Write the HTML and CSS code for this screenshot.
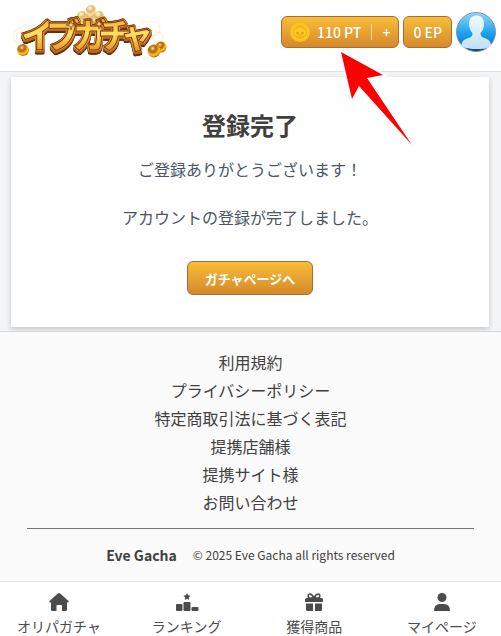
FILE: index.html
```
<!DOCTYPE html>
<html lang="ja">

<head>
    <meta charset="UTF-8">
    <meta name="viewport" content="width=device-width, initial-scale=1.0">
    <title>登録完了</title>
    <link rel="stylesheet" href="styles.css">
</head>

<body>
    <header class="header">
        <a href="#" class="logo">
            <svg width="156" height="56" viewBox="0 0 156 56">
                <defs>
                    <linearGradient id="gold" x1="0" y1="0" x2="0" y2="1">
                        <stop offset="0.2" stop-color="#f6a924" />
                        <stop offset="0.5" stop-color="#ffe164" />
                        <stop offset="0.9" stop-color="#e08c16" />
                    </linearGradient>
                    <radialGradient id="ball" cx="0.4" cy="0.3" r="0.7">
                        <stop offset="0" stop-color="#fff3b0" />
                        <stop offset="0.2" stop-color="#d98a2c" />
                        <stop offset="0.4" stop-color="#b0640f" />
                        <stop offset="0.75" stop-color="#ffc81e" />
                        <stop offset="1" stop-color="#b46c08" />
                    </radialGradient>
                    <radialGradient id="pale" cx="0.4" cy="0.3" r="0.7">
                        <stop offset="0" stop-color="#fffbe6" />
                        <stop offset="0.5" stop-color="#e3b865" />
                        <stop offset="1" stop-color="#f5dfa4" />
                    </radialGradient>
                </defs>
                <g fill="none" stroke="#fbf0cf">
                    <circle cx="8" cy="32" r="7" />
                    <circle cx="15" cy="26" r="6" />
                    <circle cx="133" cy="24" r="6" />
                    <circle cx="141" cy="25" r="7" />
                    <circle cx="146" cy="33" r="5" />
                </g>
                <g fill="url(#pale)">
                    <circle cx="67" cy="17" r="5" />
                    <circle cx="75" cy="17" r="5" />
                    <circle cx="84" cy="17" r="5" />
                    <circle cx="91" cy="17" r="5" />
                    <circle cx="70" cy="12" r="5" />
                    <circle cx="79" cy="12" r="5" />
                    <circle cx="87" cy="12" r="5" />
                    <circle cx="79" cy="6" r="5" />
                </g>
                <text class="logo-text" x="9 34 61 86 108" y="44">イブガチャ</text>
                <path d="M59 16l1 4 4 1-4 1-1 4-1-4-4-1 4-1zM87 15l1 4 4 1-4 1-1 4-1-4-4-1 4-1z" fill="#ffe88a" stroke="#8a3a10" stroke-width="0.7" />
                <circle cx="11" cy="46" r="6" fill="url(#ball)" />
                <circle cx="149" cy="43" r="5.5" fill="url(#ball)" />
                <circle cx="142" cy="47" r="6.5" fill="url(#ball)" />
            </svg>
        </a>
        <div class="points">
            <a href="#" class="gold-btn pt">
                <svg class="coin" width="20" height="20" viewBox="0 0 20 20">
                    <circle cx="10" cy="10" r="10" fill="#fac11d" />
                    <circle cx="10" cy="10" r="7.5" fill="#f5b51b" stroke="#ffd02e" />
                    <path d="M5 8q5-5 10 0l1 3q-1 4-4 2l-2-1-2 1q-3 2-4-2z" fill="#ffcb2a" />
                    <circle cx="7.5" cy="11" r="1.500" fill="#e5a012" />
                    <circle cx="12.500" cy="11" r="1.500" fill="#e5a012" />
                </svg>
                <span>110 PT</span>
                <span class="plus">+</span>
            </a>
            <a href="#" class="gold-btn ep">0 EP</a>
            <a href="#" class="avatar">
                <svg width="40" height="40" viewBox="0 0 40 40">
                    <defs>
                        <linearGradient id="sky" x1="0" y1="0" x2="0" y2="1">
                            <stop offset="0" stop-color="#8bd8fa" />
                            <stop offset="0.55" stop-color="#18a0ee" />
                            <stop offset="0.85" stop-color="#087bc8" />
                            <stop offset="1" stop-color="#073c68" />
                        </linearGradient>
                        <linearGradient id="man" x1="0" y1="0" x2="0" y2="1">
                            <stop offset="0" stop-color="#f2faff" />
                            <stop offset="1" stop-color="#bfe0fa" />
                        </linearGradient>
                    </defs>
                    <circle cx="20" cy="20" r="19.5" fill="url(#sky)" stroke="#8b9298" />
                    <path d="M20.500 3.500c5 0 7.500 3.500 7.500 8.500 0 4-1.500 7-3.500 9 0 3 1 4 4 5 4 1.500 6.500 3 6.500 8-4 3-9 3-14.500 3s-11 0-15-3c0-5 2.500-6.500 7-8 3-1 4-2 4-5-2-2-3.500-5-3.500-9 0-5 2.500-8.500 7.500-8.500z" fill="url(#man)" />
                </svg>
            </a>
        </div>
    </header>

    <svg class="arrow" width="74" height="96" viewBox="0 0 74 96">
        <path d="M2 2L44 25 28 28 73 95 20 36 13 49z" fill="#fff" stroke="#fff" stroke-width="4" />
        <path d="M2 2L44 25 28 28 73 95 20 36 13 49z" fill="#f00" />
    </svg>

    <main class="card">
        <h1>登録完了</h1>
        <p>ご登録ありがとうございます！<br><br>アカウントの登録が完了しました。</p>
        <button type="button" class="gold-btn go">ガチャページへ</button>
    </main>

    <footer class="footer">
        <ul class="links">
            <li><a href="#">利用規約</a></li>
            <li><a href="#">プライバシーポリシー</a></li>
            <li><a href="#">特定商取引法に基づく表記</a></li>
            <li><a href="#">提携店舗様</a></li>
            <li><a href="#">提携サイト様</a></li>
            <li><a href="#">お問い合わせ</a></li>
        </ul>
        <div class="copy">
            <strong>Eve Gacha</strong>
            <small>© 2025 Eve Gacha all rights reserved</small>
        </div>
    </footer>

    <nav class="tabs">
        <a href="#">
            <svg width="22" height="20" viewBox="0 0 22 20">
                <path d="M11 1Q11.600 1 12.200 1.500L20.500 9Q21.300 10 20 10.500H19V17.500Q19 19 17.500 19H14V14Q14 13 13 13H9.500Q8.500 13 8.500 14V19H4.500Q3 19 3 17.500V10.500H2Q.700 10 1.500 9L9.800 1.500Q10.400 1 11 1z" />
            </svg>
            オリパガチャ
        </a>
        <a href="#">
            <svg width="24" height="20" viewBox="0 0 24 20">
                <path d="M12 1l1.100 2.300 2.500.400-1.800 1.800.400 2.500-2.200-1.200-2.200 1.200.400-2.500-1.800-1.800 2.500-.400z" />
                <rect x="1" y="12" width="6.500" height="7" rx="1" />
                <rect x="8.500" y="10" width="7" height="9" rx="1" />
                <rect x="16.500" y="15" width="7" height="4" rx="1" />
            </svg>
            ランキング
        </a>
        <a href="#">
            <svg width="20" height="20" viewBox="0 0 20 20">
                <path d="M1 7.500Q1 6 2.500 6H17.500Q19 6 19 7.500V10H1zM2 11.500H9V19H3.500Q2 19 2 17.500zM11 11.500H18V17.500Q18 19 16.500 19H11z" />
                <path d="M10 6C8.500 3 7 1.800 5.500 2S3.500 5 5.500 6zM10 6C11.500 3 13 1.800 14.500 2S16.500 5 14.500 6z" fill="none" stroke="#4b4b4b" stroke-width="1.700" />
            </svg>
            獲得商品
        </a>
        <a href="#">
            <svg width="18" height="20" viewBox="0 0 18 20">
                <circle cx="9" cy="5.500" r="4.500" />
                <path d="M1 19Q1 12 7 12H11Q17 12 17 19z" />
            </svg>
            マイページ
        </a>
    </nav>
</body>

</html>
```
FILE: styles.css
```
* {
    box-sizing: border-box;
}

body {
    margin: 0;
    background-color: #f3f4f5;
    color: #404040;
    font-family: "Noto Sans CJK JP", sans-serif;
    font-size: 16px;
    line-height: 24px;
}

a {
    color: inherit;
    text-decoration: none;
}

svg {
    display: block;
    flex-shrink: 0;
}

.header {
    display: flex;
    justify-content: space-between;
    height: 72px;
    padding: 4px 5px 0 12px;
    background-color: #fff;
    border-bottom: 1px solid #dedfe0;
}

/* dark line, gold rim, dark rim, then the thick lower side */
.logo-text {
    font-size: 34px;
    font-weight: 900;
    fill: url(#gold);
    stroke: #7b3510;
    stroke-width: 1px;
    stroke-linejoin: round;
    filter: drop-shadow(1px 0 0 #e3a544) drop-shadow(-1px 0 0 #e3a544) drop-shadow(0 -1px 0 #7b3510) drop-shadow(0 2px 0 #b06a22) drop-shadow(0 2px 0 #6f2b0d);
}

.points {
    display: flex;
    align-items: center;
    gap: 4px;
    height: 56px;
}

.gold-btn {
    background: linear-gradient(#f8bd38, #d5892b);
    border: 1px solid #aa6c35;
    border-radius: 6px;
    color: #fff;
}

.pt,
.ep {
    display: flex;
    align-items: center;
    height: 32px;
    padding: 0 8px;
    font-size: 14px;
    font-weight: 500;
}

.ep {
    padding: 0 9px;
}

.coin {
    margin-right: 7px;
}

.plus {
    display: flex;
    align-items: center;
    margin-left: 10px;
}

.plus::before {
    content: "";
    height: 16px;
    margin-right: 10px;
    border-left: 1px solid #fbe3b5;
}

/* points at the balance */
.arrow {
    position: absolute;
    top: 50px;
    right: 88px;
}

.card {
    margin: 5px 12px 4px 11px;
    padding: 30px 16px 32px;
    background-color: #fff;
    box-shadow: 0 2px 5px rgba(0, 0, 0, 0.2);
    text-align: center;
}

h1 {
    margin: 0 0 14px;
    font-size: 24px;
    line-height: 36px;
}

p {
    margin: 0;
    color: #4b5563;
}

.go {
    height: 34px;
    margin-top: 32px;
    padding: 0 17px;
    font-family: inherit;
    font-size: 13px;
    font-weight: bold;
    vertical-align: top;
}

.footer {
    padding: 16px 27px 14px;
    background-color: #fafafa;
    border-top: 1px solid #d5d6d7;
}

.links {
    margin: 0;
    padding: 0 0 12px;
    list-style: none;
    line-height: 28px;
    text-align: center;
    border-bottom: 1px solid #737373;
}

.copy {
    display: flex;
    justify-content: center;
    align-items: center;
    gap: 16px;
    padding-top: 14px;
}

.copy strong {
    font-size: 14px;
}

.copy small {
    font-size: 12px;
}

.tabs {
    display: flex;
    justify-content: space-between;
    height: 55px;
    padding: 10px 17px 0;
    background-color: #fff;
    border-top: 1px solid #e3e4e5;
    font-size: 14px;
    line-height: 20px;
    color: #4b4b4b;
}

.tabs a {
    display: flex;
    flex-direction: column;
    align-items: center;
    gap: 4px;
    width: 84px;
}

.tabs svg {
    fill: #4b4b4b;
}
```
